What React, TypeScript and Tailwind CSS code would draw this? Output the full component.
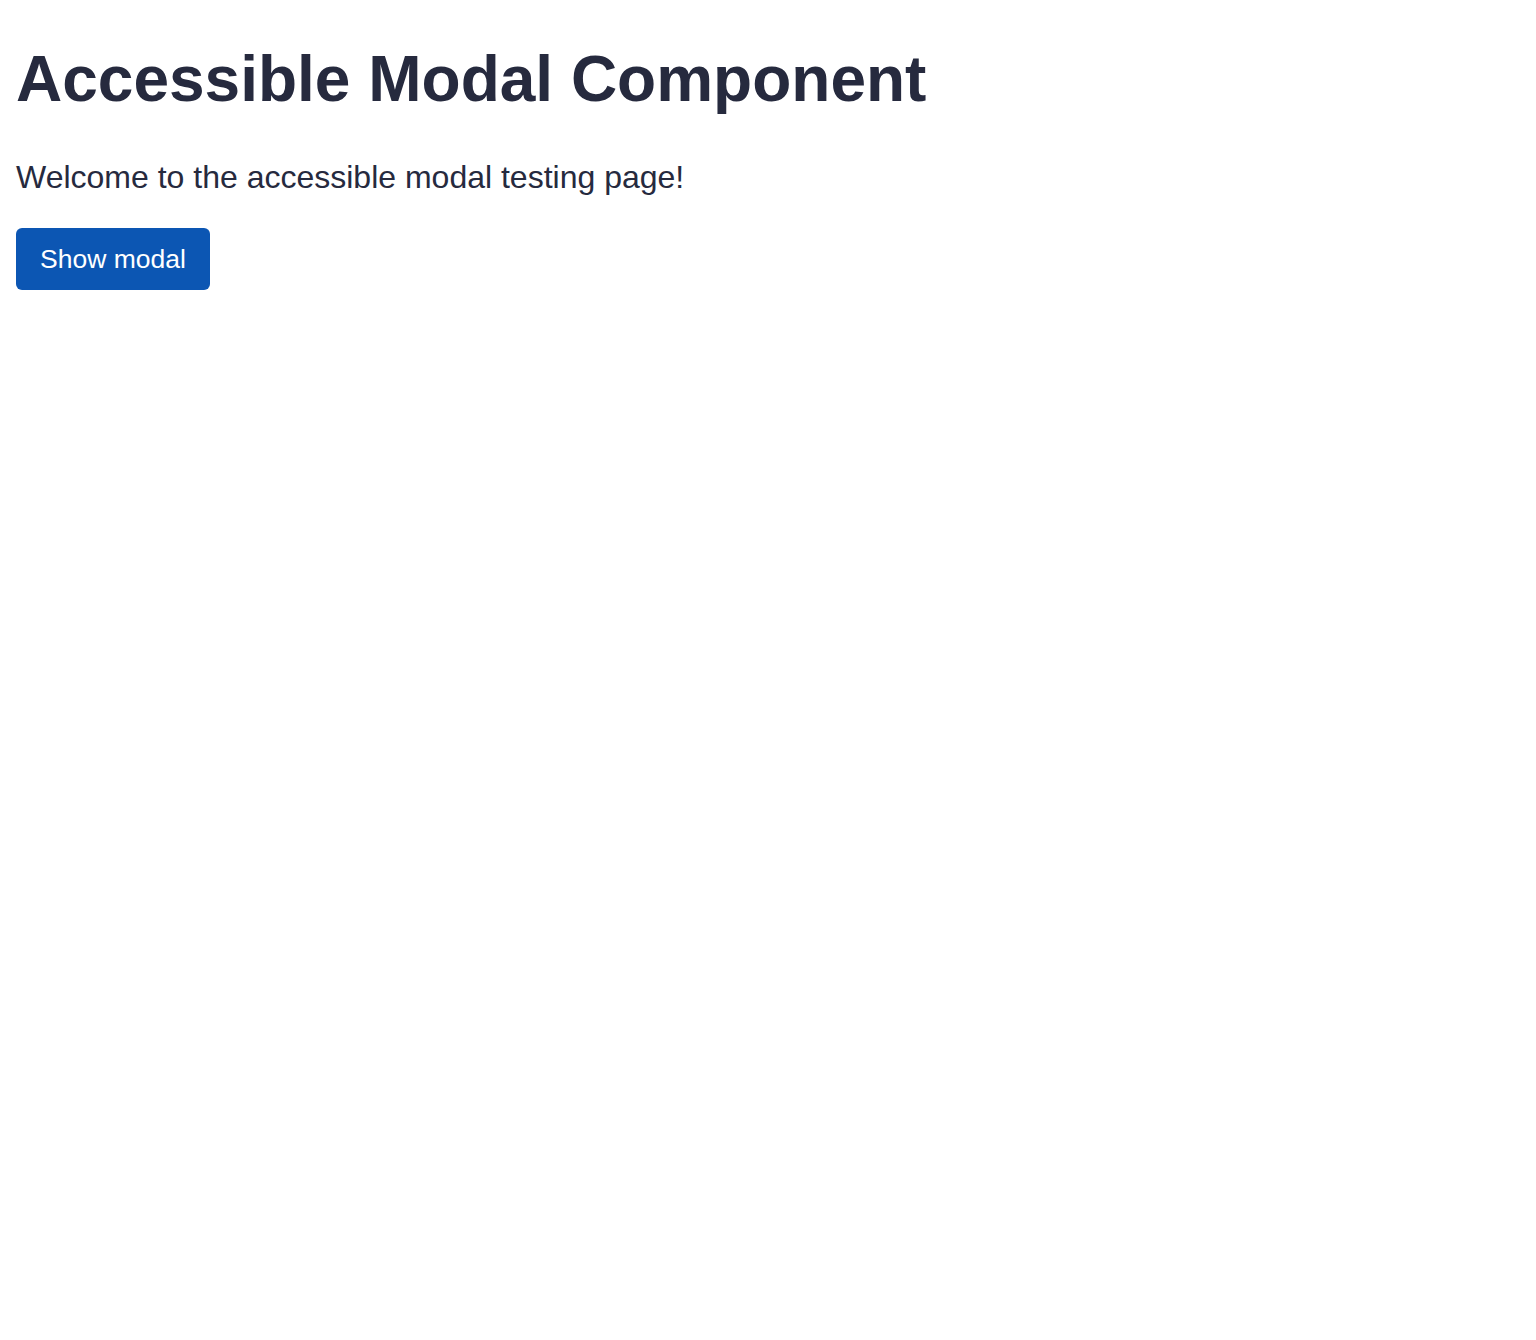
export default function App() {
  return (
    <main
      className="min-h-[1340px] bg-white px-4 text-[#262a3e]"
      style={{ fontFamily: '"Liberation Sans", Arial, Helvetica, sans-serif' }}
    >
      <h1 className="pt-[47px] text-[64px] font-bold leading-none">Accessible Modal Component</h1>
      <p className="mt-[50px] text-[32px] leading-none">Welcome to the accessible modal testing page!</p>
      <button
        type="button"
        className="mt-[35px] flex h-[62px] items-center rounded-md bg-[#0c56b3] px-6 text-[26.5px] leading-none text-white"
      >
        Show modal
      </button>
    </main>
  );
}
